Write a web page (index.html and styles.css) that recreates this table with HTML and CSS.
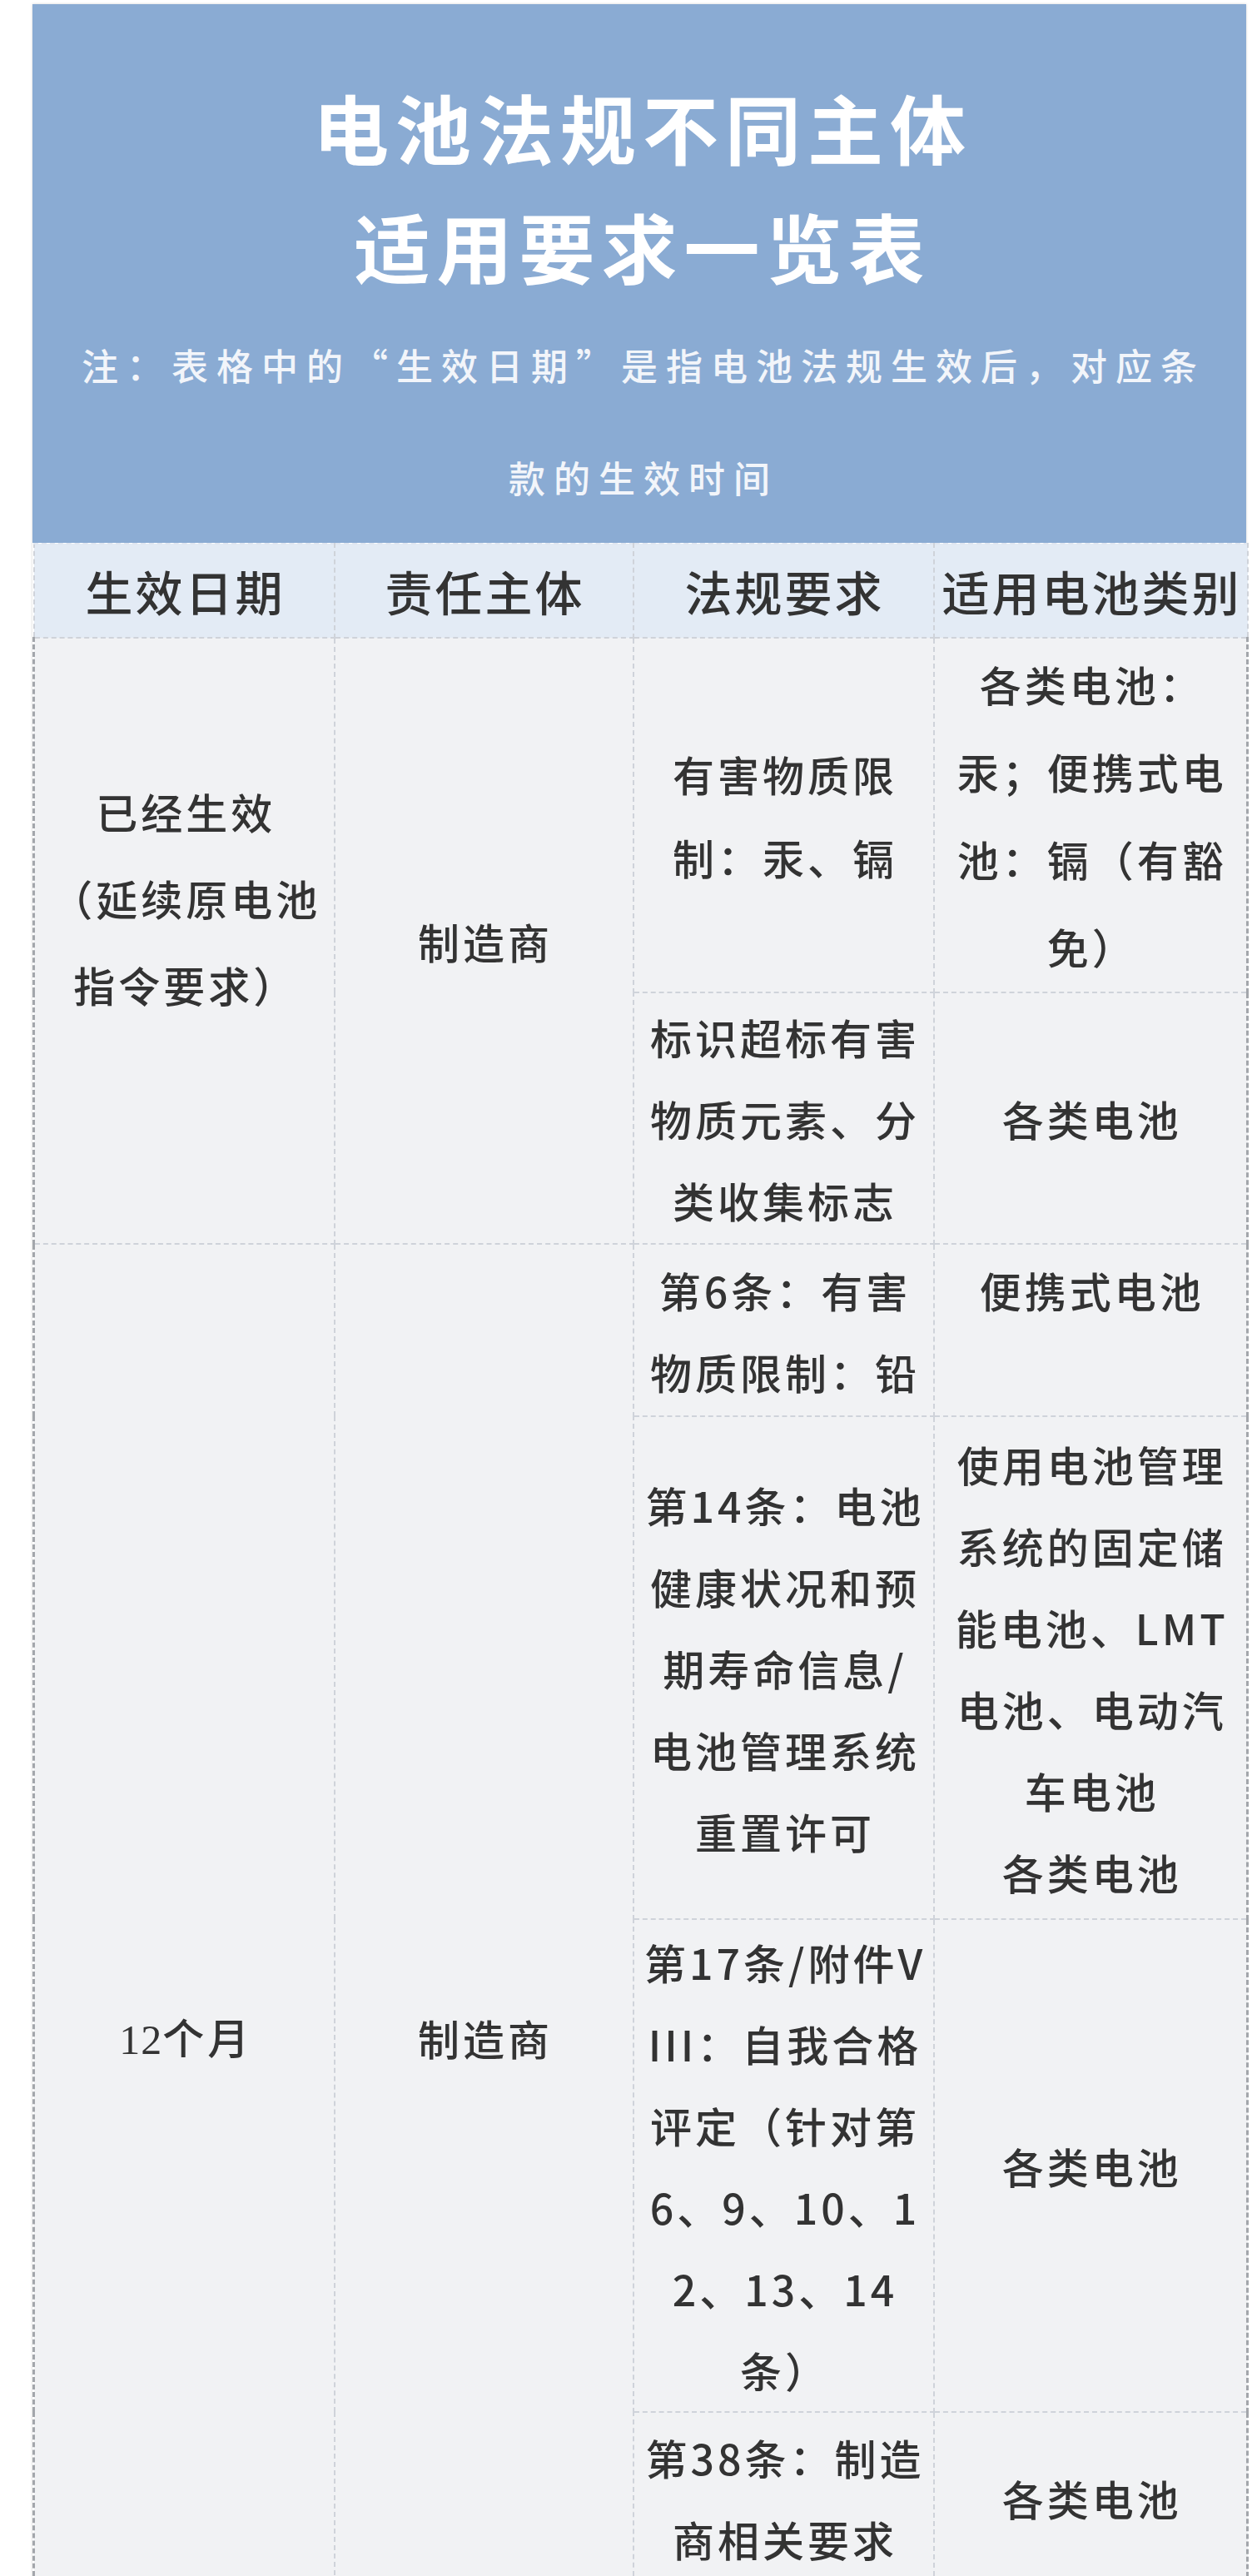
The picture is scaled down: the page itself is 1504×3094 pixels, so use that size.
FILE: index.html
```html
<!DOCTYPE html>
<html lang="zh-CN">
<head>
<meta charset="utf-8">
<title>电池法规不同主体适用要求一览表</title>
<link rel="stylesheet" href="styles.css">
</head>
<body>
<div class="page">
  <div class="card">
    <div class="banner">
      <h1 class="title">电池法规不同主体<br>适用要求一览表</h1>
      <p class="note">注：表格中的“生效日期”是指电池法规生效后，对应条<br>款的生效时间</p>
    </div>
    <table class="grid">
      <colgroup>
        <col class="c1"><col class="c2"><col class="c3"><col class="c4">
      </colgroup>
      <thead>
        <tr class="rh">
          <th>生效日期</th>
          <th>责任主体</th>
          <th>法规要求</th>
          <th>适用电池类别</th>
        </tr>
      </thead>
      <tbody>
        <tr class="ra">
          <td rowspan="2" class="lh104 edge-l">已经生效<br>（延续原电池<br>指令要求）<br>&nbsp;</td>
          <td rowspan="2">制造商</td>
          <td class="lh100">有害物质限<br>制：汞、镉</td>
          <td class="lh105 edge-r">各类电池：<br>汞；便携式电<br>池：镉（有豁<br>免）</td>
        </tr>
        <tr class="rb">
          <td>标识超标有害<br>物质元素、分<br>类收集标志</td>
          <td class="edge-r">各类电池</td>
        </tr>
        <tr class="rc">
          <td rowspan="5" class="edge-l"><span class="num-serif">12</span>个月</td>
          <td rowspan="5">制造商</td>
          <td>第6条：有害<br>物质限制：铅</td>
          <td class="edge-r">便携式电池<br>&nbsp;</td>
        </tr>
        <tr class="rd">
          <td>第14条：电池<br>健康状况和预<br>期寿命信息/<br>电池管理系统<br>重置许可</td>
          <td class="edge-r">使用电池管理<br>系统的固定储<br>能电池、LMT<br>电池、电动汽<br>车电池<br>各类电池</td>
        </tr>
        <tr class="rf">
          <td>第17条/附件V<br>III：自我合格<br>评定（针对第<br>6、9、10、1<br>2、13、14<br>条）</td>
          <td class="edge-r">各类电池</td>
        </tr>
        <tr class="re">
          <td>第38条：制造<br>商相关要求</td>
          <td class="edge-r">各类电池</td>
        </tr>
        <tr class="rz">
          <td></td>
          <td class="edge-r"></td>
        </tr>
      </tbody>
    </table>
  </div>
</div>
</body>
</html>
```
FILE: styles.css
```css
html, body {
  margin: 0;
  padding: 0;
  background: #ffffff;
}

body {
  font-family: "Noto Sans CJK SC", "Noto Sans", "Liberation Sans", sans-serif;
  color: #333333;
}

.page {
  padding: 5px 0 0 39px;
}

.card {
  width: 1458px;
  box-shadow: 0 0 3px rgba(0, 0, 0, 0.18);
}

.banner {
  background: #8aabd3;
  text-align: center;
  color: #ffffff;
  padding: 75px 0 11px;
}

.title {
  margin: 0;
  font-size: 91px;
  font-weight: 700;
  line-height: 143px;
  letter-spacing: 8px;
  padding-left: 8px;
}

.note {
  margin: 5px 0 0;
  font-size: 44px;
  font-weight: 500;
  line-height: 135px;
  letter-spacing: 10px;
  padding-left: 10px;
  color: #f2f5fa;
}

.grid {
  width: 1458px;
  border-collapse: collapse;
  table-layout: fixed;
}

.c1 { width: 361px; }
.c2 { width: 359px; }
.c3 { width: 361px; }
.c4 { width: 377px; }

.grid th,
.grid td {
  border: 2px dashed #cfd3da;
  text-align: center;
  vertical-align: middle;
  padding: 0;
  white-space: nowrap;
  color: #333333;
}

.grid th {
  background: #e3ebf5;
  font-size: 57px;
  font-weight: 500;
  letter-spacing: 3px;
  line-height: 97px;
  padding: 7px 0 7px 3px;
  border-top-color: #dfe6f0;
}

.grid td {
  background: #f1f2f4;
  font-size: 50px;
  font-weight: 500;
  letter-spacing: 4px;
  line-height: 98px;
  padding-left: 4px;
}

.grid .edge-l {
  border-left: 3px dashed #a3a6ab;
}

.grid .edge-r {
  border-right: 3px dashed #a3a6ab;
}

.grid .lh100 { line-height: 100px; }
.grid .lh104 { line-height: 104px; }
.grid .lh105 { line-height: 105px; }

.num-serif {
  font-family: "Liberation Serif", serif;
  font-weight: 400;
  letter-spacing: 1px;
}

.rh { height: 113px; }
.ra { height: 426px; }
.rb { height: 302px; }
.rc { height: 207px; }
.rd { height: 604px; }
.rf { height: 592px; }
.re { height: 206px; }
.rz { height: 297px; }
```
